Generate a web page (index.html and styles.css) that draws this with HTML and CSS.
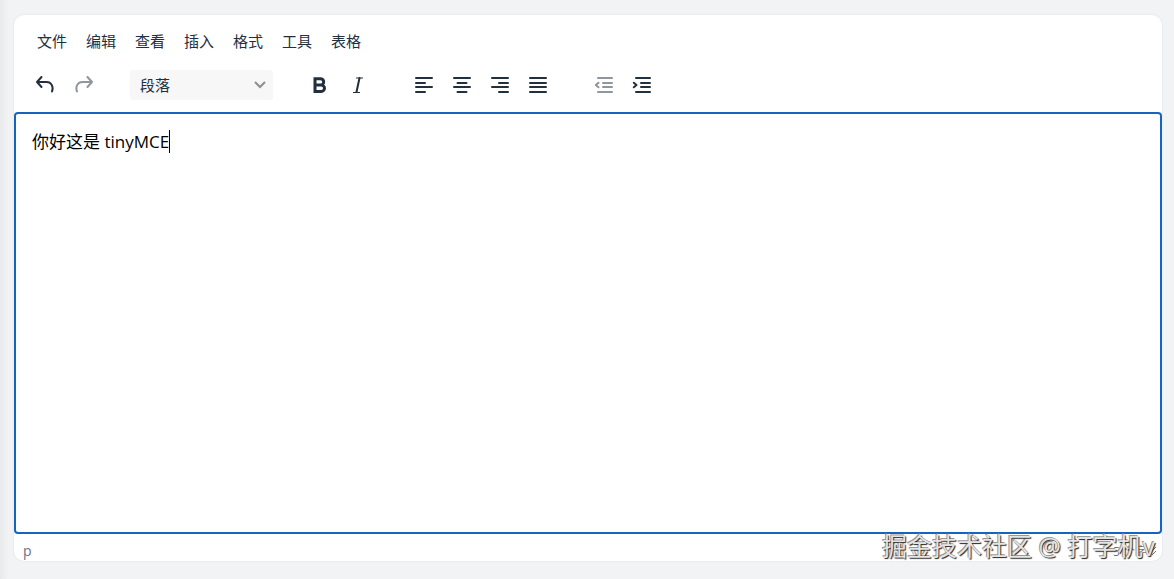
FILE: index.html
```html
<!DOCTYPE html>
<html lang="zh-CN">
    <head>
        <meta charset="utf-8">
        <title>tinyMCE</title>
        <link rel="stylesheet" href="styles.css">
    </head>

    <body>
        <div class="editor">
            <div class="menubar">
                <button type="button">文件</button>
                <button type="button">编辑</button>
                <button type="button">查看</button>
                <button type="button">插入</button>
                <button type="button">格式</button>
                <button type="button">工具</button>
                <button type="button">表格</button>
            </div>
            <div class="toolbar">
                <div class="group history">
                    <button type="button" aria-label="撤销">
                        <svg width="24" height="24" viewBox="0 0 24 24"><path class="line" d="M8.500 4 4 9l4.500 5M4 9h9.500c4.800 0 7.300 4.500 5.500 9.500"/></svg>
                    </button>
                    <button type="button" aria-label="重做" disabled>
                        <svg width="24" height="24" viewBox="0 0 24 24"><path class="line" d="m16.500 4 4.500 5-4.500 5M21 9h-9.500c-4.800 0-7.300 4.500-5.500 9.500"/></svg>
                    </button>
                </div>
                <div class="group">
                    <div class="select-box">
                        <select aria-label="块">
                            <option>段落</option>
                            <option>标题 1</option>
                            <option>标题 2</option>
                        </select>
                        <svg class="chevron" width="12" height="8" viewBox="0 0 12 8"><path d="m1 1 5 5 5-5"/></svg>
                    </div>
                </div>
                <div class="group">
                    <button type="button" aria-label="粗体">
                        <svg width="24" height="24" viewBox="0 0 24 24"><path class="bold" d="M7 5.700h5.500a3.200 3.200 0 0 1 0 6.400H7zM7 12.100h6.300a3.200 3.200 0 0 1 0 6.400H7z"/></svg>
                    </button>
                    <button type="button" aria-label="斜体">
                        <svg width="24" height="24" viewBox="0 0 24 24"><path class="thin" d="M10 5h7M7 19.500h7"/><path class="line" d="m13.500 5-3 14"/></svg>
                    </button>
                </div>
                <div class="group">
                    <button type="button" aria-label="左对齐">
                        <svg width="24" height="24" viewBox="0 0 24 24"><path class="line" d="M4 5h16M4 10h9M4 14h16M4 19h9"/></svg>
                    </button>
                    <button type="button" aria-label="居中对齐">
                        <svg width="24" height="24" viewBox="0 0 24 24"><path class="line" d="M4 5h16M7.500 10h9M4 14h16M7.500 19h9"/></svg>
                    </button>
                    <button type="button" aria-label="右对齐">
                        <svg width="24" height="24" viewBox="0 0 24 24"><path class="line" d="M4 5h16M11 10h9M4 14h16M11 19h9"/></svg>
                    </button>
                    <button type="button" aria-label="两端对齐">
                        <svg width="24" height="24" viewBox="0 0 24 24"><path class="line" d="M4 5h16M4 10h16M4 14h16M4 19h16"/></svg>
                    </button>
                </div>
                <div class="group">
                    <button type="button" aria-label="减少缩进" disabled>
                        <svg width="24" height="24" viewBox="0 0 24 24"><path class="line" d="M6 5h14M11 10h9M11 14h9M6 19h14M6.500 9.700 3.800 12l2.700 2.300"/></svg>
                    </button>
                    <button type="button" aria-label="增加缩进">
                        <svg width="24" height="24" viewBox="0 0 24 24"><path class="line" d="M6 5h14M11 10h9M11 14h9M6 19h14M3.800 9.700 6.500 12l-2.700 2.300"/></svg>
                    </button>
                </div>
            </div>
            <div class="content" contenteditable="true" role="textbox" aria-multiline="true" aria-label="编辑区" spellcheck="false">
                <p>你好这是 tinyMCE<span class="caret"></span></p>
            </div>
            <div class="statusbar">
                <span>p</span>
                <span class="count">5 个字</span>
                <svg class="resize" width="10" height="10" viewBox="0 0 10 10"><path d="M1 9 9 1M5 9l4-4"/></svg>
            </div>
        </div>
        <div class="watermark">掘金技术社区 @ 打字机v</div>
    </body>
</html>
```
FILE: styles.css
```css
* {
    box-sizing: border-box;
}
body {
    margin: 0;
    min-height: 100vh;
    padding: 15px 12px 18px 14px;
    display: flex;
    background: linear-gradient(to right, #e7e9eb, #f1f3f5 8px);
    font-family: "Open Sans", "Noto Sans CJK SC", sans-serif;
    color: #222f3e;
}
.editor {
    flex: 1;
    min-width: 0;
    display: flex;
    flex-direction: column;
    border-radius: 10px;
    background: #fff;
    box-shadow: 0 0 2px rgba(34, 47, 62, 0.1);
}
button,
select {
    border: 0;
    font-family: inherit;
    font-size: 15px;
    color: inherit;
}
button {
    padding: 0;
    background: transparent;
    cursor: pointer;
}
button:disabled {
    opacity: 0.5;
    cursor: default;
}
.menubar {
    display: flex;
    gap: 3px;
    padding: 8px 15px 0;
}
.menubar button {
    height: 34px;
    padding: 0 8px;
}
.toolbar {
    display: flex;
    flex-wrap: wrap;
    gap: 28px;
    padding: 9px 12px 8px;
}
.group {
    display: flex;
    align-items: center;
}
.group button {
    display: flex;
    align-items: center;
    justify-content: center;
    width: 38px;
    height: 38px;
}
.line {
    fill: none;
    stroke: currentColor;
    stroke-width: 2;
    stroke-linecap: round;
    stroke-linejoin: round;
}
.thin {
    fill: none;
    stroke: currentColor;
    stroke-width: 1;
}
.bold {
    fill: none;
    stroke: currentColor;
    stroke-width: 3;
}
.select-box {
    position: relative;
}
.select-box select {
    appearance: none;
    width: 143px;
    height: 30px;
    padding: 0 28px 0 10px;
    border-radius: 3px;
    background: #f7f7f7;
}
.chevron {
    position: absolute;
    top: 11px;
    right: 7px;
    fill: none;
    stroke: #8b9096;
    stroke-width: 2;
    pointer-events: none;
}
.content {
    flex: 1;
    padding: 16px 16px;
    border: 2px solid #1565c0;
    border-radius: 4px;
    outline: none;
    font-size: 17px;
    line-height: 24px;
    color: #000;
}
.content p {
    margin: 0;
}
.caret {
    display: inline-block;
    width: 1px;
    height: 23px;
    vertical-align: top;
    background: #000;
}
.statusbar {
    display: flex;
    align-items: center;
    height: 27px;
    padding: 6px 5px 0 9px;
    font-size: 14px;
    color: #6b7280;
}
.count {
    margin-left: auto;
    font-size: 12px;
}
.resize {
    fill: none;
    stroke: #6b7280;
}
.watermark {
    position: absolute;
    right: 19px;
    bottom: 15px;
    font-size: 25px;
    line-height: 36px;
    color: #e4e4e4;
    text-shadow: 1px 1px 1px #222, -1px -1px 0 #999;
    pointer-events: none;
}
```
